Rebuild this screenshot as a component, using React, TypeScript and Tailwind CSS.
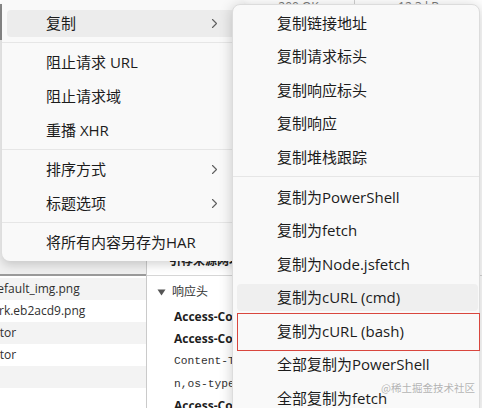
import React from "react";

const Chevron = () => (
  <svg width="7" height="11" viewBox="0 0 7 11" fill="none" className="shrink-0">
    <path d="M1.5 1.5L5.5 5.5L1.5 9.5" stroke="#5f5f5f" strokeWidth="1.1" strokeLinecap="round" strokeLinejoin="round" />
  </svg>
);

type LeftItem = { label: string; sub?: boolean; active?: boolean } | "sep";

const leftItems: LeftItem[] = [
  { label: "复制", sub: true, active: true },
  "sep",
  { label: "阻止请求 URL" },
  { label: "阻止请求域" },
  { label: "重播 XHR" },
  "sep",
  { label: "排序方式", sub: true },
  { label: "标题选项", sub: true },
  "sep",
  { label: "将所有内容另存为HAR" },
];

type RightItem = { label: string; hover?: boolean } | "sep";

const rightItems: RightItem[] = [
  { label: "复制链接地址" },
  { label: "复制请求标头" },
  { label: "复制响应标头" },
  { label: "复制响应" },
  { label: "复制堆栈跟踪" },
  "sep",
  { label: "复制为PowerShell" },
  { label: "复制为fetch" },
  { label: "复制为Node.jsfetch" },
  { label: "复制为cURL (cmd)", hover: true },
  { label: "复制为cURL (bash)" },
  { label: "全部复制为PowerShell" },
  { label: "全部复制为fetch" },
];

const rows = [
  { text: "default_img.png", ml: "-ml-[10px]", bg: "bg-[#f3f3f3]" },
  { text: "dark.eb2acd9.png", ml: "-ml-[15px]", bg: "bg-white" },
  { text: "Initiator", ml: "-ml-[28px]", bg: "bg-[#f3f3f3]" },
  { text: "Initiator", ml: "-ml-[28px]", bg: "bg-white" },
  { text: "", ml: "", bg: "bg-[#f3f3f3]" },
  { text: "", ml: "", bg: "bg-white" },
];

export default function App() {
  return (
    <div className="relative w-[482px] h-[408px] overflow-hidden bg-white flex flex-col font-['Open_Sans','Noto_Sans_CJK_SC',sans-serif] text-[#1c1c1c]">
      {/* background top strip */}
      <div className="h-[4px] overflow-hidden flex items-end bg-white text-[12px] text-[#777] leading-none">
        <div className="w-[243px] h-full border-r border-[#d0d0d0]" />
        <div className="w-[112px] h-full border-r border-[#d0d0d0] flex items-end justify-center">
          <span className="translate-y-[9px]">200 OK</span>
        </div>
        <div className="flex-1 h-full flex items-end justify-center">
          <span className="translate-y-[9px]">12.3 kB</span>
        </div>
      </div>

      {/* background devtools panes */}
      <div className="flex-1 flex min-h-0">
        {/* left: request list */}
        <div className="w-[147px] shrink-0 flex flex-col border-r border-[#cacaca] overflow-hidden">
          <div className="h-[270px] shrink-0 bg-[#efefef] flex">
            <div className="w-[2px] h-[36px] bg-[#8a8a8a]" />
          </div>
          <div className="h-[2px] shrink-0 bg-[#9a9a9a]" />
          <div className="h-[2px] shrink-0 bg-white" />
          {rows.map((r, i) => (
            <div key={i} className={`h-[22px] shrink-0 flex items-center overflow-hidden whitespace-nowrap text-[12px] text-[#303030] ${r.bg}`}>
              <span className={r.ml}>{r.text}</span>
            </div>
          ))}
        </div>

        {/* right: headers pane */}
        <div className="flex-1 flex flex-col bg-white overflow-hidden whitespace-nowrap">
          <div className="h-[271px] shrink-0 flex items-end pb-[3px] pl-[22px] text-[12px] font-bold text-[#222]">
            <span className="translate-y-[-2px]">引荐来源网址政策</span>
          </div>
          <div className="h-px shrink-0 bg-[#d6d6d6]" />
          <div className="h-[4px] shrink-0" />
          <div className="h-[24px] shrink-0 flex items-center pl-[10px] text-[12px] text-[#333]">
            <svg width="9" height="7" viewBox="0 0 9 7" className="mr-[6px]">
              <path d="M0.5 0.5H8.5L4.5 6.5Z" fill="#555" />
            </svg>
            <span>响应头</span>
          </div>
          <div className="h-[2px] shrink-0" />
          <div className="h-[22.3px] shrink-0 flex items-center pl-[27px] text-[12px] font-bold text-[#1e1e1e]">Access-Control-Allow-Credentials</div>
          <div className="h-[22.3px] shrink-0 flex items-center pl-[27px] text-[12px] font-bold text-[#1e1e1e]">Access-Control-Allow-Headers</div>
          <div className="h-[22.3px] shrink-0 flex items-center pl-[27px] text-[11.25px] font-['Liberation_Mono',monospace] text-[#333]">Content-Type,Authorizatio</div>
          <div className="h-[22.3px] shrink-0 flex items-center pl-[27px] text-[11.25px] font-['Liberation_Mono',monospace] text-[#333]">n,os-type,version</div>
          <div className="h-[22.3px] shrink-0 flex items-center pl-[27px] text-[12px] font-bold text-[#1e1e1e]">Access-Control-Allow-Methods</div>
        </div>
      </div>

      {/* left context menu */}
      <div className="absolute left-[2px] top-0 w-[242px] bg-[#f9f9f9] rounded-b-[8px] pt-[6px] pb-[2px] shadow-[0_4px_10px_rgba(0,0,0,0.16)] z-10">
        {leftItems.map((it, i) =>
          it === "sep" ? (
            <div key={i} className="h-[5px] flex items-center">
              <div className="h-px w-full bg-[#e6e6e6]" />
            </div>
          ) : (
            <div key={i} className="h-[34px] flex py-[3.5px] px-[5px]">
              <div className={`flex-1 flex items-center rounded-[4px] pl-[39px] pr-[21px] text-[15px] ${it.active ? "bg-[#ececec]" : ""}`}>
                <span className="flex-1">{it.label}</span>
                {it.sub ? <Chevron /> : null}
              </div>
            </div>
          )
        )}
      </div>

      {/* right submenu */}
      <div className="absolute left-[232px] top-[4px] w-[248px] bg-[#f9f9f9] rounded-[8px] border border-[#dcdcdc] pt-[1px] shadow-[0_2px_14px_rgba(0,0,0,0.2)] z-20">
        {rightItems.map((it, i) =>
          it === "sep" ? (
            <div key={i} className="h-[6px] flex items-center">
              <div className="h-px w-full bg-[#e6e6e6]" />
            </div>
          ) : (
            <div key={i} className="h-[33.6px] flex py-[3px] pl-[4px] pr-[1px]">
              <div className={`flex-1 flex items-center rounded-[4px] pl-[40px] text-[15px] whitespace-nowrap ${it.hover ? "bg-[#efefef]" : ""}`}>
                {it.label}
              </div>
            </div>
          )
        )}
      </div>

      {/* red annotation box */}
      <div className="absolute left-[237px] top-[313px] w-[243px] h-[38px] border border-[#d9463e] z-30" />

      {/* watermark */}
      <div className="absolute left-[381px] top-[383px] text-[10.5px] leading-none text-[#b4b4b4] z-30 font-['Noto_Sans_CJK_SC',sans-serif] [text-shadow:0_0_2px_#fff]">
        @稀土掘金技术社区
      </div>
    </div>
  );
}
